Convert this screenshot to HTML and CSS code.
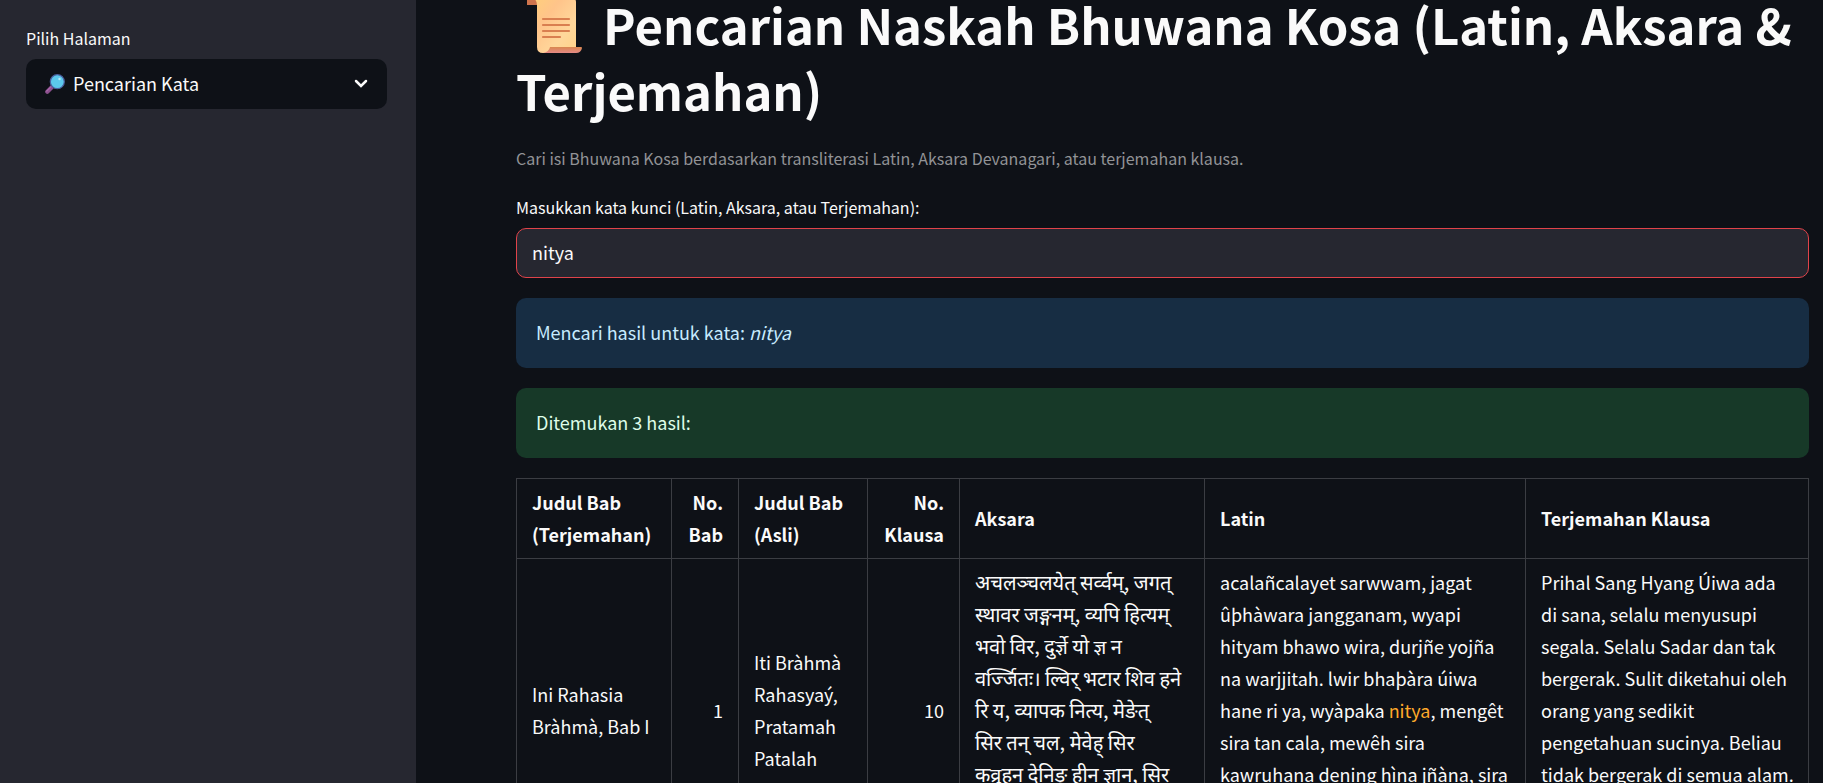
FILE: index.html
```html
<!DOCTYPE html>
<html lang="id">
<head>
<meta charset="utf-8">
<meta name="viewport" content="width=device-width, initial-scale=1">
<title>Pencarian Naskah Bhuwana Kosa</title>
<link rel="stylesheet" href="styles.css">
</head>
<body>
<div class="app">
  <aside class="sidebar">
    <label class="label" for="page">Pilih Halaman</label>
    <div class="select-box">
      <svg class="select-icon" viewBox="0 0 20 20" aria-hidden="true">
        <path d="M2.3 17.7 8 12" stroke="#8b4f8d" stroke-width="4.2" stroke-linecap="round"/>
        <path d="M1.8 17 6 12.800" stroke="#a968aa" stroke-width="1.200" stroke-linecap="round"/>
        <circle cx="12.300" cy="7.700" r="7" fill="#5cc8ec" stroke="#4b5f9e" stroke-width="1.200"/>
        <circle cx="14.500" cy="5" r="1.200" fill="#b5eafa"/>
      </svg>
      <select class="select" id="page"><option>Pencarian Kata</option></select>
      <svg class="select-arrow" viewBox="0 0 14 10" aria-hidden="true">
        <path d="M2 2l5 5 5-5" fill="none" stroke="#fafafa" stroke-width="2.500" stroke-linecap="round" stroke-linejoin="miter"/>
      </svg>
    </div>
  </aside>
  <main class="main">
    <h1 class="title"><svg class="title-icon" viewBox="0 0 76 56" role="img" aria-label="Naskah">
        <defs>
          <linearGradient id="paper" x1="0" y1="0" x2="1" y2="1"><stop offset="0" stop-color="#ffd07a"/><stop offset=".35" stop-color="#ffc48a"/><stop offset=".7" stop-color="#ffd79b"/><stop offset="1" stop-color="#ffd388"/></linearGradient>
          <linearGradient id="roll" x1="0" y1="0" x2="0" y2="1"><stop offset="0" stop-color="#d9874f"/><stop offset="1" stop-color="#e58a86"/></linearGradient>
        </defs>
        <path d="M11 8V4a4 4 0 0 1 4-4h8v8z" fill="#cf744c"/>
        <path d="M15 0h40a5 5 0 0 1 5 5v46l-30 5h-3q-6 0-6-6V8q0-6-6-8z" fill="url(#paper)"/>
        <path d="M34 50h31q1 0 1 1-1 5-6 5H27q6-1 7-6z" fill="url(#roll)"/>
        <path d="M27 22h26M27 28h26M27 34h26M27 40h17" stroke="#d97f50" stroke-width="2.200" stroke-linecap="round"/>
      </svg> Pencarian Naskah Bhuwana Kosa (Latin, Aksara &amp; Terjemahan)</h1>
    <p class="caption">Cari isi Bhuwana Kosa berdasarkan transliterasi Latin, Aksara Devanagari, atau terjemahan klausa.</p>
    <div class="field">
      <label class="label" for="query">Masukkan kata kunci (Latin, Aksara, atau Terjemahan):</label>
      <input class="input" id="query" type="text" value="nitya">
    </div>
    <div class="alert alert-info">Mencari hasil untuk kata: <em>nitya</em></div>
    <div class="alert alert-success">Ditemukan 3 hasil:</div>
    <table class="results">
      <colgroup><col class="c-title"><col class="c-bab"><col class="c-orig"><col class="c-num"><col class="c-aksara"><col class="c-latin"><col class="c-trans"></colgroup>
      <thead>
        <tr><th>Judul Bab (Terjemahan)</th><th class="num">No. Bab</th><th>Judul Bab (Asli)</th><th class="num">No. Klausa</th><th>Aksara</th><th>Latin</th><th>Terjemahan Klausa</th></tr>
      </thead>
      <tbody>
        <tr class="entry">
          <td>Ini Rahasia Bràhmà, Bab I</td>
          <td class="num">1</td>
          <td>Iti Bràhmà Rahasyaý, Pratamah Patalah</td>
          <td class="num">10</td>
          <td class="long aksara" lang="sa">अचलञ्चलयेत् सर्व्वम्, जगत् स्थावर जङ्गनम्, व्यपि हित्यम् भवो विर, दुर्ज्ञे यो ज्ञ न वर्ज्जितः। ल्विर् भटार शिव हने<br>रि य, व्यापक नित्य, मेङेत्<br>सिर तन् चल, मेवेह् सिर<br>कव्रुहन देनिङ् हीन ज्ञान, सिर</td>
          <td class="long">acalañcalayet sarwwam, jagat ûþhàwara jangganam, wyapi hityam bhawo wira, durjñe yojña na warjjitah. lwir bhaþàra úiwa hane ri ya, wyàpaka <span class="hit">nitya</span>, mengêt sira tan cala, mewêh sira kawruhana dening hìna jñàna, sira</td>
          <td class="long">Prihal Sang Hyang Úiwa ada di&nbsp;sana, selalu menyusupi segala. Selalu Sadar dan tak bergerak. Sulit diketahui oleh orang yang sedikit pengetahuan sucinya. Beliau tidak bergerak di semua alam.</td>
        </tr>
      </tbody>
    </table>
  </main>
</div>
</body>
</html>
```
FILE: styles.css
```css
* { box-sizing: border-box; }

body {
  margin: 0;
  background: #0e1117;
  color: #fafafa;
  font-family: "Noto Sans CJK SC", "Noto Sans", "Noto Sans Devanagari", sans-serif;
  font-size: 18px;
  line-height: 32px;
}

.app {
  display: flex;
  height: 100vh;
  overflow: hidden;
}

.sidebar {
  flex: 0 0 416px;
  padding: 24px 29px 0 26px;
  background: #262730;
}

.label {
  display: block;
  margin-bottom: 7px;
  font-size: 16px;
  line-height: 28px;
}

.select-box { position: relative; }

.select {
  display: block;
  width: 100%;
  height: 50px;
  padding: 0 47px 2px;
  border: 0;
  border-radius: 10px;
  appearance: none;
  background: #0e1117;
  color: inherit;
  font: inherit;
}

.select-icon {
  position: absolute;
  left: 19px;
  top: 15px;
  width: 20px;
  height: 20px;
}

.select-arrow {
  position: absolute;
  right: 19px;
  top: 20px;
  width: 14px;
  height: 10px;
}

.main {
  flex: 1;
  min-width: 0;
  padding: 0 14px 0 100px;
}

.title {
  margin: -9px 0 21px;
  font-size: 49px;
  font-weight: 700;
  line-height: 66px;
}

.title-icon {
  width: 76px;
  height: 56px;
  vertical-align: -8px;
}

.caption {
  margin: 0 0 21px;
  color: #929396;
  font-size: 16px;
  line-height: 28px;
}

.field { margin-bottom: 20px; }

.input {
  display: block;
  width: 100%;
  height: 50px;
  padding: 0 15px 2px;
  border: 1px solid #e0434a;
  border-radius: 10px;
  outline: 0;
  background: #262730;
  color: inherit;
  font: inherit;
}

.alert {
  margin-bottom: 20px;
  padding: 18px 20px 20px;
  border-radius: 10px;
}

.alert-info { background: #172d43; color: #c7ebff; }
.alert-success { background: #173928; color: #dffde9; }

.results {
  width: 100%;
  table-layout: fixed;
  border-collapse: collapse;
}

.c-title { width: 155px; }
.c-bab { width: 67px; }
.c-orig { width: 129px; }
.c-num { width: 92px; }
.c-aksara { width: 245px; }
.c-latin { width: 321px; }
.c-trans { width: 283px; }

.results th,
.results td {
  padding: 7px 15px 8px;
  border: 1px solid #3b3d43;
  text-align: left;
  vertical-align: middle;
}

.results th { font-weight: 700; }

.results .num { text-align: right; }

.entry { height: 304px; }

.results .long {
  padding-right: 12px;
  vertical-align: top;
}

.results .aksara { font-size: 20px; }

.hit { color: #ffa92b; }
```
